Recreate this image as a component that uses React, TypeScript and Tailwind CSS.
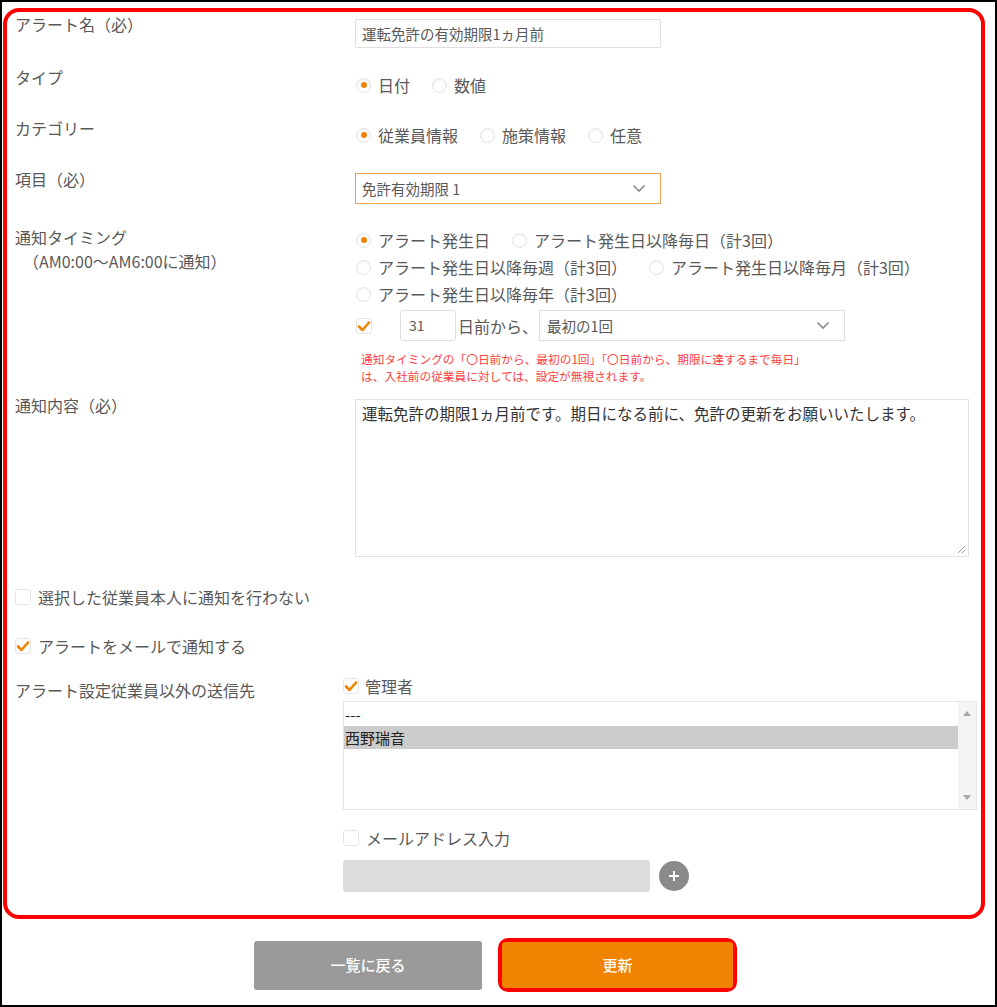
import React from 'react';

// Form for editing an alert setting (アラート設定編集)

const Radio: React.FC<{ checked?: boolean; label: string; className?: string }> = ({ checked, label, className }) => (
  <span className={`flex items-center ${className ?? ''}`}>
    <span className="flex h-[15px] w-[15px] shrink-0 items-center justify-center rounded-full border border-[#e2e2e2] bg-white shadow-[inset_0_1px_2px_rgba(0,0,0,0.06)]">
      {checked && <span className="h-[6px] w-[6px] rounded-full bg-[#f08300]" />}
    </span>
    <span className="ml-[7px]">{label}</span>
  </span>
);

const Check: React.FC<{ checked?: boolean }> = ({ checked }) => (
  <span className="flex h-[16px] w-[16px] shrink-0 items-center justify-center rounded-[3px] border border-[#e4e4e4] bg-white">
    {checked && (
      <svg width="14" height="14" viewBox="0 0 14 14" fill="none">
        <path d="M2 7.5 L5.5 11 L12 3.5" stroke="#f08300" strokeWidth="2.6" strokeLinecap="round" strokeLinejoin="round" />
      </svg>
    )}
  </span>
);

const Chevron: React.FC = () => (
  <svg width="14" height="9" viewBox="0 0 14 9" fill="none">
    <path d="M1.5 1.5 L7 7 L12.5 1.5" stroke="#8a8a8a" strokeWidth="1.6" />
  </svg>
);

export default function App() {
  return (
    <div className="h-[1007px] w-[997px] border-2 border-black bg-white font-['Noto_Sans_CJK_JP',sans-serif] text-[#595959]">
      {/* Red highlighted form area */}
      <div className="ml-[1px] mt-[6px] h-[911px] w-[982px] rounded-[16px] border-4 border-[#ff0000] pl-[8px]">
        {/* アラート名 */}
        <div className="flex h-[48px] items-start">
          <div className="mt-[1px] w-[340px] text-[16px] leading-[22px]">アラート名（必）</div>
          <div className="mt-[7px] flex h-[29px] w-[306px] items-center rounded-[2px] border border-[#dedede] px-[6px] text-[14.5px]">
            運転免許の有効期限1ヵ月前
          </div>
        </div>

        {/* タイプ */}
        <div className="flex h-[52px] items-start">
          <div className="mt-[6px] w-[340px] text-[16px] leading-[22px]">タイプ</div>
          <div className="mt-[14px] flex pl-[1px] text-[16px] leading-[22px]">
            <Radio checked label="日付" />
            <Radio label="数値" className="ml-[22px]" />
          </div>
        </div>

        {/* カテゴリー */}
        <div className="flex h-[52px] items-start">
          <div className="mt-[5px] w-[340px] text-[16px] leading-[22px]">カテゴリー</div>
          <div className="mt-[12px] flex pl-[1px] text-[16px] leading-[22px]">
            <Radio checked label="従業員情報" />
            <Radio label="施策情報" className="ml-[22px]" />
            <Radio label="任意" className="ml-[22px]" />
          </div>
        </div>

        {/* 項目 */}
        <div className="flex h-[58px] items-start">
          <div className="mt-[4px] w-[340px] text-[16px] leading-[22px]">項目（必）</div>
          <div className="mt-[9px] flex h-[31px] w-[306px] items-center justify-between border border-[#f0a050] pl-[6px] pr-[14px] text-[14.5px]">
            <span>免許有効期限 1</span>
            <Chevron />
          </div>
        </div>

        {/* 通知タイミング */}
        <div className="flex h-[170px] items-start">
          <div className="w-[340px] text-[16px] leading-[22px]">
            <div className="mt-[4px]">通知タイミング</div>
            <div className="mt-[2px] pl-[8px]">（AM0:00～AM6:00に通知）</div>
          </div>
          <div className="mt-[7px] flex flex-col pl-[1px]">
            <div className="flex flex-col gap-[5px] text-[16px] leading-[22px]">
              <div className="flex">
                <Radio checked label="アラート発生日" />
                <Radio label="アラート発生日以降毎日（計3回）" className="ml-[22px]" />
              </div>
              <div className="flex">
                <Radio label="アラート発生日以降毎週（計3回）" />
                <Radio label="アラート発生日以降毎月（計3回）" className="ml-[22px]" />
              </div>
              <div className="flex">
                <Radio label="アラート発生日以降毎年（計3回）" />
              </div>
            </div>
            <div className="mt-[5px] flex h-[31px] items-center text-[16px]">
              <Check checked />
              <div className="ml-[28px] flex h-[31px] w-[56px] items-center rounded-[3px] border border-[#dedede] pl-[8px] text-[14px]">
                31
              </div>
              <span className="ml-[2px]">日前から、</span>
              <div className="ml-[1px] flex h-[31px] w-[306px] items-center justify-between border border-[#dedede] pl-[7px] pr-[14px] text-[14.5px]">
                <span>最初の1回</span>
                <Chevron />
              </div>
            </div>
            <div className="mt-[9px] pl-[5px] text-[11.7px] leading-[17px] text-[#ff4040]">
              <div>通知タイミングの「〇日前から、最初の1回」「〇日前から、期限に達するまで毎日」</div>
              <div>は、入社前の従業員に対しては、設定が無視されます。</div>
            </div>
          </div>
        </div>

        {/* 通知内容 */}
        <div className="flex h-[178px] items-start">
          <div className="mt-[2px] w-[340px] text-[16px] leading-[22px]">通知内容（必）</div>
          <div className="relative mt-[7px] h-[158px] w-[614px] border border-[#e2e2e2] px-[6px] pt-[2px] text-[15.5px] leading-[22px] text-[#333]">
            運転免許の期限1ヵ月前です。期日になる前に、免許の更新をお願いいたします。
            <svg className="absolute bottom-[2px] right-[2px]" width="9" height="9" viewBox="0 0 9 9">
              <path d="M8 1 L1 8 M8 5 L5 8" stroke="#999" strokeWidth="1" />
            </svg>
          </div>
        </div>

        {/* checkboxes */}
        <div className="mt-[16px] flex h-[22px] items-center text-[16px]">
          <Check />
          <span className="ml-[7px]">選択した従業員本人に通知を行わない</span>
        </div>
        <div className="mt-[27px] flex h-[22px] items-center text-[16px]">
          <Check checked />
          <span className="ml-[7px]">アラートをメールで通知する</span>
        </div>

        {/* 送信先 */}
        <div className="mt-[18px] flex items-start">
          <div className="mt-[4px] w-[328px] text-[16px] leading-[22px]">アラート設定従業員以外の送信先</div>
          <div className="flex flex-col">
            <div className="flex h-[22px] items-center text-[16px]">
              <Check checked />
              <span className="ml-[6px]">管理者</span>
            </div>
            <div className="mt-[4px] flex h-[109px] w-[634px] border border-[#e6e6e6] text-[15px] leading-[23px] text-[#222]">
              <div className="flex-1 pt-[1px]">
                <div className="pl-[1px]">---</div>
                <div className="bg-[#cccccc] pl-[1px]">西野瑞音</div>
              </div>
              <div className="flex w-[18px] flex-col items-center justify-between bg-[#f4f4f4] py-[9px]">
                <svg width="8" height="5" viewBox="0 0 8 5">
                  <path d="M0 5 L4 0 L8 5 Z" fill="#a8a8a8" />
                </svg>
                <svg width="8" height="5" viewBox="0 0 8 5">
                  <path d="M0 0 L4 5 L8 0 Z" fill="#a8a8a8" />
                </svg>
              </div>
            </div>
            <div className="mt-[17px] flex h-[22px] items-center text-[16px]">
              <Check />
              <span className="ml-[7px]">メールアドレス入力</span>
            </div>
            <div className="mt-[11px] flex items-center">
              <div className="h-[32px] w-[307px] rounded-[3px] bg-[#dddddd]" />
              <div className="ml-[9px] flex h-[30px] w-[30px] items-center justify-center rounded-full bg-[#8a8a8a]">
                <svg width="12" height="12" viewBox="0 0 12 12">
                  <path d="M6 1 V11 M1 6 H11" stroke="#fff" strokeWidth="2" />
                </svg>
              </div>
            </div>
          </div>
        </div>
      </div>

      {/* Buttons */}
      <div className="mt-[19px] flex h-[54px] items-center pl-[252px]">
        <button className="flex h-[49px] w-[228px] items-center justify-center rounded-[3px] bg-[#9a9a9a] text-[15px] font-medium text-white">
          一覧に戻る
        </button>
        <div className="ml-[16px] h-[54px] w-[239px] rounded-[10px] border-4 border-[#ff0000]">
          <button className="flex h-full w-full items-center justify-center rounded-[3px] bg-[#f08300] text-[15px] font-medium text-white">
            更新
          </button>
        </div>
      </div>
    </div>
  );
}
